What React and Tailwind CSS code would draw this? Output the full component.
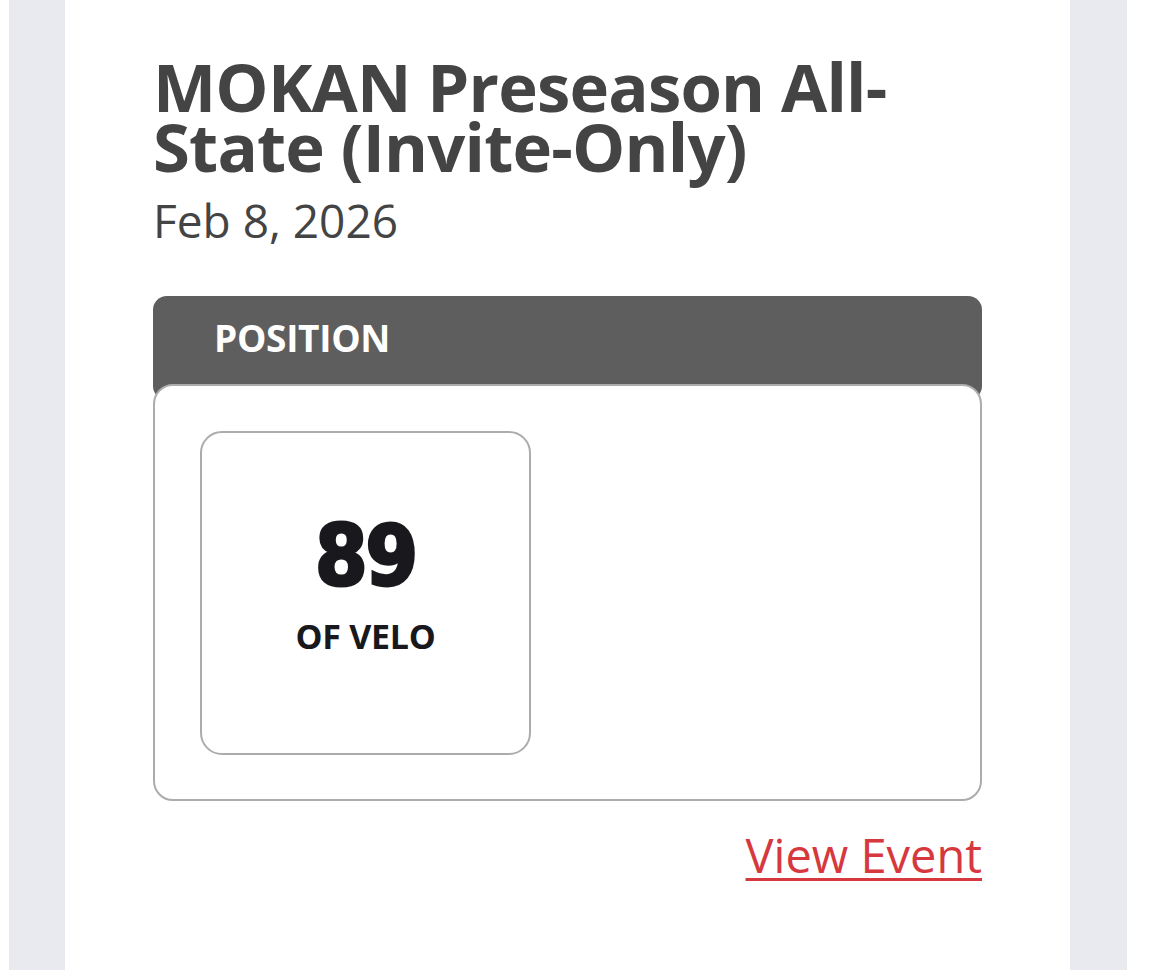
export default function App() {
  return (
    <div className="flex h-[970px] w-full overflow-hidden bg-white font-['Open_Sans',sans-serif]">
      <div className="w-[9px] shrink-0 bg-white" />
      <div className="w-[56px] shrink-0 bg-[#e9eaf0]" />
      <main className="w-[1005px] shrink-0 bg-white pl-[88px] pt-[56px]">
        <div className="w-[829px]">
          <h1 className="text-[67px] font-bold leading-[60px] tracking-[-0.8px] text-[#444444]">
            MOKAN Preseason All-
            <br />
            State (Invite-Only)
          </h1>
          <p className="mt-[16px] text-[46px] leading-[56px] text-[#444444]">Feb 8, 2026</p>

          <section className="mt-[48px]">
            <div className="h-[104px] rounded-[14px] bg-[#5e5e5e] pl-[61px] pt-[14px]">
              <span className="text-[37px] font-bold leading-[56px] tracking-[-0.3px] text-white">POSITION</span>
            </div>
            <div className="-mt-[16px] h-[417px] rounded-[20px] border-2 border-[#acacac] bg-white pl-[45px] pt-[45px]">
              <div className="flex h-[324px] w-[331px] flex-col items-center justify-center rounded-[22px] border-2 border-[#acacac] pb-[12px]">
                <span className="font-['DejaVu_Sans_Condensed','DejaVu_Sans',sans-serif] text-[84px] font-black leading-[76px] tracking-[-2px] text-[#19191d] [-webkit-text-stroke:3px_#19191d]">
                  89
                </span>
                <span className="mt-[22px] text-[34px] font-bold leading-[40px] tracking-[-0.3px] text-[#19191d]">OF VELO</span>
              </div>
            </div>
          </section>

          <div className="mt-[24px] flex justify-end">
            <a href="#" className="text-[47px] leading-[60px] text-[#d6383e] underline decoration-[3px] underline-offset-[5px]">
              View Event
            </a>
          </div>
        </div>
      </main>
      <div className="w-[57px] shrink-0 bg-[#e9eaf0]" />
      <div className="flex-1 bg-white" />
    </div>
  );
}
